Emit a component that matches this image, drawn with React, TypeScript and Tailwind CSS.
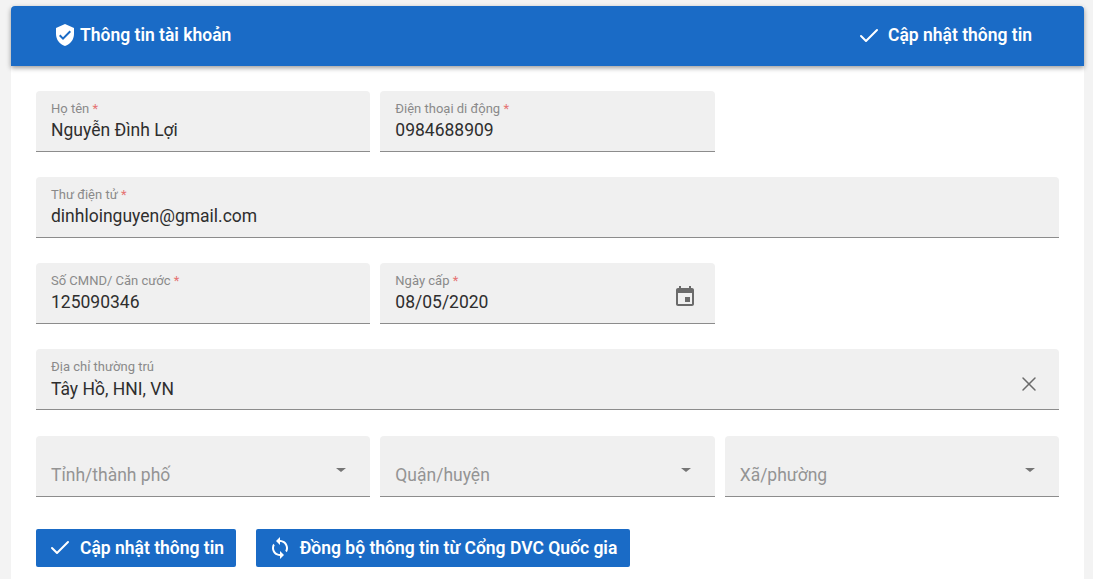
import React from 'react';
import { Check, X } from 'lucide-react';

interface FieldProps {
  label?: string;
  value?: string;
  placeholder?: string;
  required?: boolean;
  className?: string;
  icon?: React.ReactNode;
}

const ShieldIcon = () => (
  <svg viewBox="0 0 24 24" className="w-6 h-6 fill-white mb-[2px]">
    <path d="M12 1 3 5v6c0 5.55 3.84 10.74 9 12 5.16-1.26 9-6.45 9-12V5l-9-4zm-2 16-4-4 1.41-1.41L10 14.17l6.59-6.59L18 9l-8 8z" />
  </svg>
);

const CalendarIcon = () => (
  <svg viewBox="0 0 24 24" className="w-6 h-6 fill-[#6b6b6b]">
    <path d="M17 12h-5v5h5v-5zM16 1v2H8V1H6v2H5c-1.11 0-1.99.9-1.99 2L3 19c0 1.1.89 2 2 2h14c1.1 0 2-.9 2-2V5c0-1.1-.9-2-2-2h-1V1h-2zm3 18H5V8h14v11z" />
  </svg>
);

const SyncIcon = () => (
  <svg viewBox="0 0 24 24" className="w-6 h-6 fill-white -translate-x-px">
    <path d="M12 4V1L8 5l4 4V6c3.31 0 6 2.69 6 6 0 1.01-.25 1.97-.7 2.8l1.46 1.46C19.54 15.03 20 13.57 20 12c0-4.42-3.58-8-8-8zm0 14c-3.31 0-6-2.69-6-6 0-1.01.25-1.97.7-2.8L5.24 7.74C4.46 8.97 4 10.43 4 12c0 4.42 3.58 8 8 8v3l4-4-4-4v3z" />
  </svg>
);

const Field: React.FC<FieldProps> = ({ label, value, placeholder, required, className = '', icon }) => (
  <div className={`relative h-[61px] bg-[#f0f0f0] rounded-t border-b border-[#8c8c8c] px-[15px] ${className}`}>
    {label && (
      <div className="pt-[11px] text-[13px] leading-[14px] text-[#8a8a8a]">
        {label}
        {required && <span className="text-[#e57373]"> *</span>}
      </div>
    )}
    {value && <div className="mt-[2px] text-[17.5px] leading-[24px] text-[#2e2e2e]">{value}</div>}
    {placeholder && <div className="pt-[27px] text-[17.5px] leading-[24px] text-[#949494]">{placeholder}</div>}
    {icon}
  </div>
);

const SelectArrow = () => (
  <div className="absolute right-[24px] top-[32px] w-0 h-0 border-l-[5px] border-r-[5px] border-t-[4px] border-l-transparent border-r-transparent border-t-[#757575]" />
);

export default function App() {
  return (
    <div className="h-[579px] overflow-hidden bg-[#f3f3f3] pt-[6px] pl-[11px] pr-[9px] font-['Roboto',sans-serif]">
      <div className="bg-white h-full">
        {/* Header */}
        <div className="h-[60px] bg-[#1a6bc6] rounded-t shadow-[0_2px_5px_rgba(0,0,0,0.4)] flex items-center justify-between pl-[42px] pr-[52px] text-white text-[17.5px] font-semibold">
          <div className="flex items-center gap-[3px]">
            <ShieldIcon />
            <span className="pb-[2px]">Thông tin tài khoản</span>
          </div>
          <div className="flex items-center gap-[7px]">
            <Check className="w-6 h-6" strokeWidth={2} />
            <span className="pb-[2px]">Cập nhật thông tin</span>
          </div>
        </div>

        {/* Form */}
        <div className="px-[25px] pt-[25px]">
          <div className="grid grid-cols-3 gap-x-[10px] gap-y-[25px]">
            <Field label="Họ tên" required value="Nguyễn Đình Lợi" />
            <Field label="Điện thoại di động" required value="0984688909" />
            <div />
            <Field label="Thư điện tử" required value="dinhloinguyen@gmail.com" className="col-span-3" />
            <Field label="Số CMND/ Căn cước" required value="125090346" />
            <Field
              label="Ngày cấp"
              required
              value="08/05/2020"
              icon={
                <div className="absolute right-[18px] top-[22px]">
                  <CalendarIcon />
                </div>
              }
            />
            <div />
            <Field
              label="Địa chỉ thường trú"
              value="Tây Hồ, HNI, VN"
              className="col-span-3 [&>div:nth-child(2)]:mt-[3px]"
              icon={<X className="absolute right-[18px] top-[23px] w-[24px] h-[24px] text-[#6b6b6b]" strokeWidth={1.5} />}
            />
          </div>
          <div className="grid grid-cols-3 gap-x-[10px] mt-[26px]">
            <Field placeholder="Tỉnh/thành phố" icon={<SelectArrow />} />
            <Field placeholder="Quận/huyện" icon={<SelectArrow />} />
            <Field placeholder="Xã/phường" icon={<SelectArrow />} />
          </div>

          {/* Actions */}
          <div className="flex gap-[20px] mt-[32px]">
            <button className="h-[38px] w-[200px] bg-[#1a6bc6] rounded-[2px] text-white text-[17.5px] font-semibold flex items-center justify-center gap-[8px]">
              <Check className="w-6 h-6" strokeWidth={2} />
              <span>Cập nhật thông tin</span>
            </button>
            <button className="h-[38px] w-[374px] bg-[#1a6bc6] rounded-[2px] text-white text-[17.5px] font-semibold flex items-center justify-center gap-[7px]">
              <SyncIcon />
              <span>Đồng bộ thông tin từ Cổng DVC Quốc gia</span>
            </button>
          </div>
        </div>
      </div>
    </div>
  );
}
